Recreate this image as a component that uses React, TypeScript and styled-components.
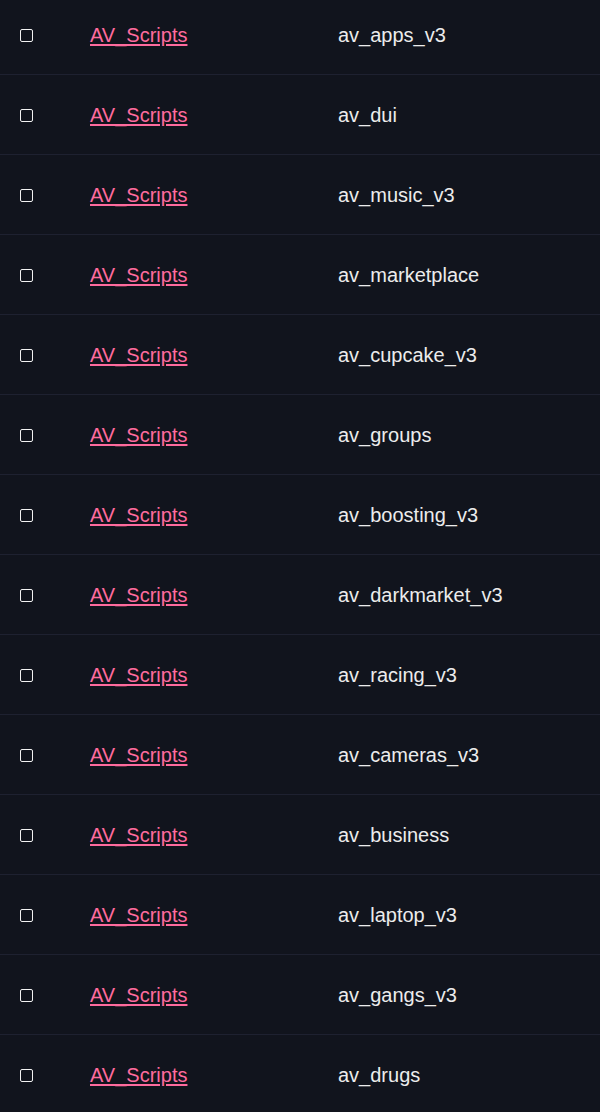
import React from "react";
import styled, { createGlobalStyle } from "styled-components";

const Global = createGlobalStyle`
  html, body {
    margin: 0;
    padding: 0;
    background: #11141d;
  }
  body {
    font-family: "Liberation Sans", Arial, sans-serif;
    overflow: hidden;
  }
`;

const Table = styled.div`
  display: flex;
  flex-direction: column;
  margin-top: -5px;
  background: #11141d;
`;

const Row = styled.div`
  display: grid;
  grid-template-columns: 90px 248px 1fr;
  align-items: center;
  box-sizing: border-box;
  height: 80px;
  padding-top: 2px;
  border-bottom: 1px solid #1e2130;
`;

const CheckCell = styled.div`
  display: flex;
  align-items: center;
  padding-left: 20px;
`;

const Check = styled.span`
  display: block;
  width: 11px;
  height: 11px;
  border: 1px solid #f2f2f2;
  border-radius: 2px;
  background: #11141d;
`;

const Owner = styled.a`
  font-size: 20px;
  color: #ff6b9e;
  text-decoration: underline;
  text-decoration-thickness: 2px;
  text-underline-offset: 2px;
  cursor: pointer;
  justify-self: start;
`;

const Name = styled.span`
  font-size: 20px;
  color: #ececec;
`;

const names = [
  "av_apps_v3",
  "av_dui",
  "av_music_v3",
  "av_marketplace",
  "av_cupcake_v3",
  "av_groups",
  "av_boosting_v3",
  "av_darkmarket_v3",
  "av_racing_v3",
  "av_cameras_v3",
  "av_business",
  "av_laptop_v3",
  "av_gangs_v3",
  "av_drugs",
];

export default function App() {
  return (
    <>
      <Global />
      <Table>
        {names.map((n) => (
          <Row key={n}>
            <CheckCell>
              <Check />
            </CheckCell>
            <Owner>AV_Scripts</Owner>
            <Name>{n}</Name>
          </Row>
        ))}
      </Table>
    </>
  );
}
